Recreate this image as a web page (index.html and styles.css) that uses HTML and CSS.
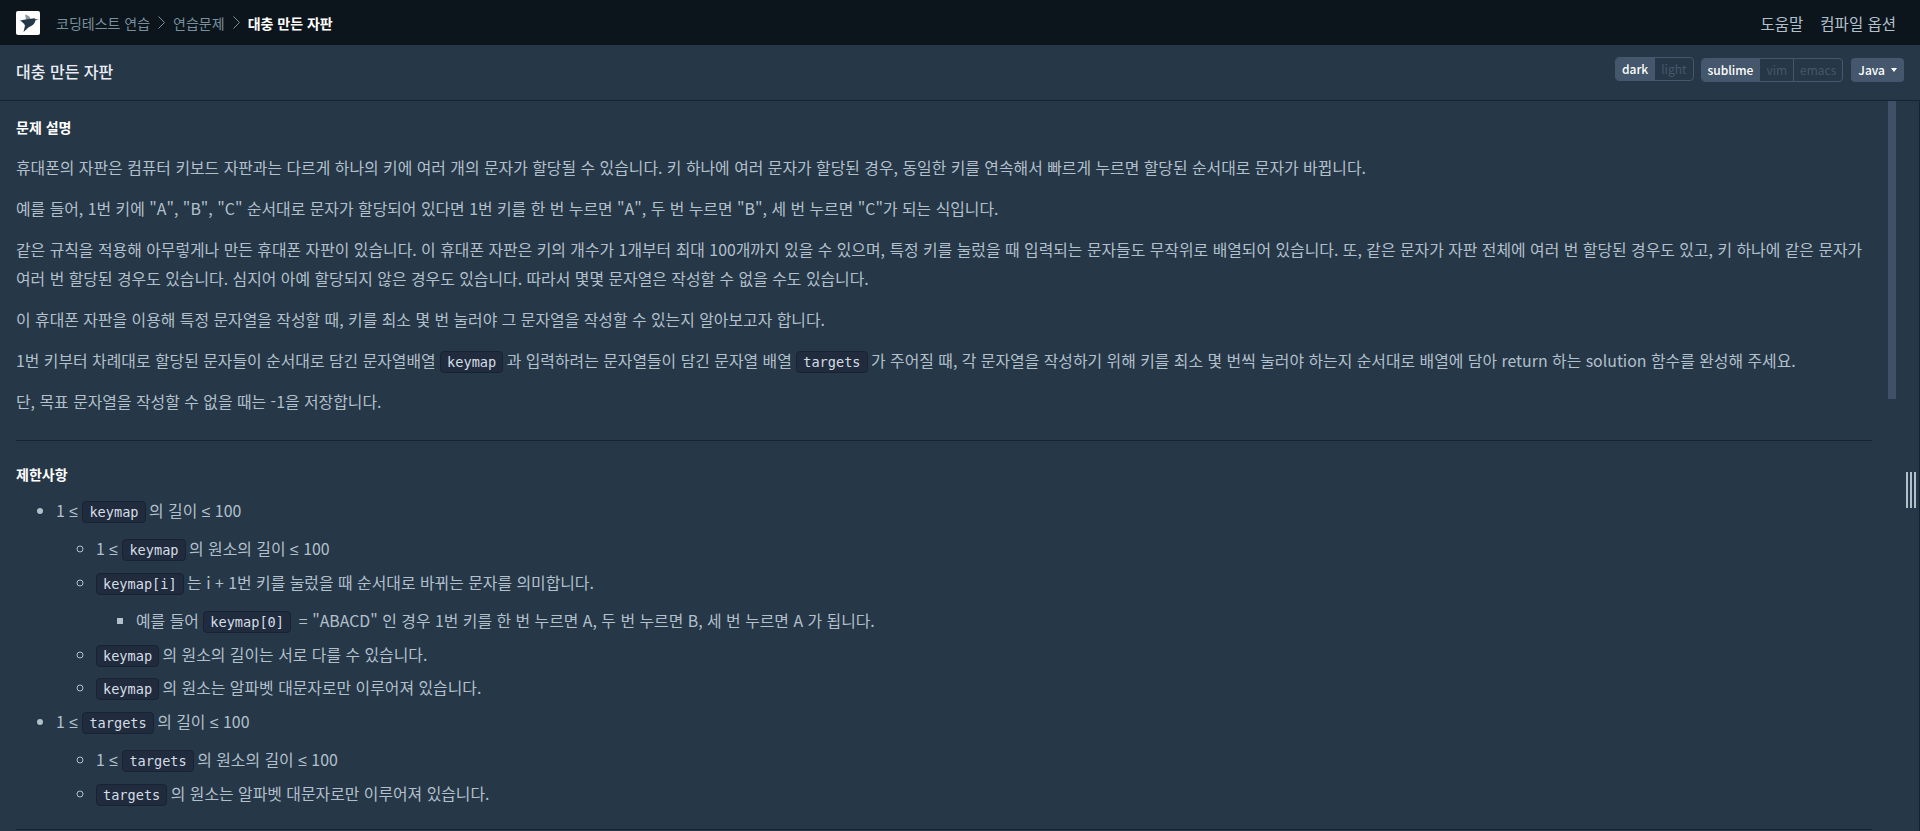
FILE: index.html
```html
<!DOCTYPE html>
<html lang="ko">
<head>
	<meta charset="UTF-8">
	<title>대충 만든 자판</title>
	<link rel="stylesheet" href="styles.css">
</head>
<body>
	<nav class="navbar">
		<div class="crumbs">
			<span class="logo">
				<svg width="24" height="24" viewBox="0 0 24 24">
					<rect width="24" height="24" rx="2" fill="#fff"/>
					<path d="M9 3.5 L13 5 L14.5 8 L10 8.5 Z" fill="#8a97a5"/>
					<path d="M4 9.5 L12 8 L17 7.5 C18 7 19 7.5 19.5 8.3 L23 8.6 L19.5 9.3 C19 12 17 15 13 16 L7.5 21 L9 14.5 C8 12 6 11 4 9.5 Z" fill="#263747"/>
				</svg>
			</span>
			<span class="crumb">코딩테스트 연습</span>
			<svg class="chev" width="7" height="13" viewBox="0 0 7 13"><path d="M.5 .5 L6.5 6.5 L.5 12.5" fill="none" stroke="#78909c"/></svg>
			<span class="crumb">연습문제</span>
			<svg class="chev" width="7" height="13" viewBox="0 0 7 13"><path d="M.5 .5 L6.5 6.5 L.5 12.5" fill="none" stroke="#78909c"/></svg>
			<span class="crumb now">대충 만든 자판</span>
		</div>
		<div class="nav-links">
			<span>도움말</span>
			<span>컴파일 옵션</span>
		</div>
	</nav>
	<header class="title-bar">
		<h1>대충 만든 자판</h1>
		<div class="options">
			<div class="toggle theme"><span class="on">dark</span><span>light</span></div>
			<div class="toggle"><span class="on">sublime</span><span>vim</span><span>emacs</span></div>
			<div class="lang">Java<i class="caret"></i></div>
		</div>
	</header>
	<main class="workspace">
		<section class="guide">
			<h6>문제 설명</h6>
			<p>휴대폰의 자판은 컴퓨터 키보드 자판과는 다르게 하나의 키에 여러 개의 문자가 할당될 수 있습니다. 키 하나에 여러 문자가 할당된 경우, 동일한 키를 연속해서 빠르게 누르면 할당된 순서대로 문자가 바뀝니다.</p>
			<p>예를 들어, 1번 키에 "A", "B", "C" 순서대로 문자가 할당되어 있다면 1번 키를 한 번 누르면 "A", 두 번 누르면 "B", 세 번 누르면 "C"가 되는 식입니다.</p>
			<p>같은 규칙을 적용해 아무렇게나 만든 휴대폰 자판이 있습니다. 이 휴대폰 자판은 키의 개수가 1개부터 최대 100개까지 있을 수 있으며, 특정 키를 눌렀을 때 입력되는 문자들도 무작위로 배열되어 있습니다. 또, 같은 문자가 자판 전체에 여러 번 할당된 경우도 있고, 키 하나에 같은 문자가 여러 번 할당된 경우도 있습니다. 심지어 아예 할당되지 않은 경우도 있습니다. 따라서 몇몇 문자열은 작성할 수 없을 수도 있습니다.</p>
			<p>이 휴대폰 자판을 이용해 특정 문자열을 작성할 때, 키를 최소 몇 번 눌러야 그 문자열을 작성할 수 있는지 알아보고자 합니다.</p>
			<p>1번 키부터 차례대로 할당된 문자들이 순서대로 담긴 문자열배열 <code>keymap</code> 과 입력하려는 문자열들이 담긴 문자열 배열 <code>targets</code> 가 주어질 때, 각 문자열을 작성하기 위해 키를 최소 몇 번씩 눌러야 하는지 순서대로 배열에 담아 return 하는 solution 함수를 완성해 주세요.</p>
			<p>단, 목표 문자열을 작성할 수 없을 때는 -1을 저장합니다.</p>
			<hr>
			<h5>제한사항</h5>
			<ul class="limits">
				<li>1 <span class="le">≤</span> <code>keymap</code> 의 길이 <span class="le">≤</span> 100
					<ul>
						<li>1 <span class="le">≤</span> <code>keymap</code> 의 원소의 길이 <span class="le">≤</span> 100</li>
						<li><code>keymap[i]</code> 는 i + 1번 키를 눌렀을 때 순서대로 바뀌는 문자를 의미합니다.
							<ul>
								<li>예를 들어 <code>keymap[0]</code> &nbsp;= "ABACD" 인 경우 1번 키를 한 번 누르면 A, 두 번 누르면 B, 세 번 누르면 A 가 됩니다.</li>
							</ul>
						</li>
						<li><code>keymap</code> 의 원소의 길이는 서로 다를 수 있습니다.</li>
						<li><code>keymap</code> 의 원소는 알파벳 대문자로만 이루어져 있습니다.</li>
					</ul>
				</li>
				<li>1 <span class="le">≤</span> <code>targets</code> 의 길이 <span class="le">≤</span> 100
					<ul>
						<li>1 <span class="le">≤</span> <code>targets</code> 의 원소의 길이 <span class="le">≤</span> 100</li>
						<li><code>targets</code> 의 원소는 알파벳 대문자로만 이루어져 있습니다.</li>
					</ul>
				</li>
			</ul>
			<hr class="next">
		</section>
		<div class="scroll-track"><div class="scroll-thumb"></div></div>
		<div class="gutter"><div class="grip"><i></i><i></i><i></i></div></div>
	</main>
</body>
</html>
```

FILE: styles.css
```css
* {
	margin: 0;
	padding: 0;
	box-sizing: border-box;
}
html, body {
	height: 100%;
	overflow: hidden;
}
body {
	display: flex;
	flex-direction: column;
	background: #263747;
	color: #b2c0cc;
	font-family: "Noto Sans CJK KR", "Noto Sans", sans-serif;
	font-size: 15.88px;
}
.navbar {
	height: 45px;
	flex: none;
	display: flex;
	justify-content: space-between;
	align-items: center;
	padding: 0 24px 0 16px;
	background: #0c151c;
}
.crumbs {
	display: flex;
	align-items: center;
	font-size: 14px;
}
.logo {
	display: flex;
	margin-right: 16px;
}
.crumb {
	color: #78909c;
}
.crumb.now {
	color: #fff;
	font-weight: 700;
}
.chev {
	margin: 0 8px;
}
.nav-links {
	display: flex;
	gap: 17px;
	font-size: 15.5px;
	color: #b2c0cc;
}
.title-bar {
	height: 56px;
	flex: none;
	display: flex;
	justify-content: space-between;
	align-items: center;
	padding: 0 16px;
	border-bottom: 1px solid #172334;
}
.title-bar h1 {
	font-size: 16px;
	font-weight: 500;
	color: #e9ecf3;
	margin-bottom: 4px;
}
.options {
	display: flex;
	align-items: center;
	gap: 8px;
	margin-bottom: 6px;
}
.toggle {
	display: flex;
	height: 24px;
	border: 1px solid #44576c;
	border-radius: 4px;
	overflow: hidden;
	font-size: 12px;
	line-height: 22px;
	color: #44576c;
}
.toggle span {
	padding: 0 6px;
	border-left: 1px solid #44576c;
}
.toggle span:first-child {
	border-left: 0;
}
.toggle .on {
	background: #44576c;
	color: #fff;
	font-weight: 500;
}
.theme {
	margin: 0 -1px 2px 1px;
}
.lang {
	display: flex;
	align-items: center;
	height: 24px;
	padding: 0 7px;
	border-radius: 4px;
	background: #44576c;
	color: #fff;
	font-size: 12px;
	font-weight: 500;
}
.caret {
	margin-left: 6px;
	border-top: 4px solid #fff;
	border-left: 3px solid transparent;
	border-right: 3px solid transparent;
}
.workspace {
	flex: 1;
	min-height: 0;
	display: flex;
	overflow: hidden;
}
.guide {
	flex: 1;
	min-width: 0;
	padding: 15px 16px 0;
	line-height: 28.8px;
}
.guide h6 {
	font-size: 14px;
	line-height: 22px;
	font-weight: 700;
	color: #fff;
	margin-bottom: 15.6px;
}
.guide p {
	margin-bottom: 12.4px;
}
.guide hr {
	border: 0;
	border-top: 1px solid #172334;
	margin: 23px 0 22px;
}
.guide hr.next {
	margin-top: 20px;
}
.guide h5 {
	font-size: 14px;
	line-height: 22px;
	font-weight: 700;
	color: #fff;
	margin-bottom: 11.6px;
}
.limits {
	padding-left: 40px;
}
.limits ul {
	padding-left: 40px;
	margin-top: 9.6px;
}
.limits li {
	margin-bottom: 4.8px;
}
.le {
	font-family: "Noto Sans", sans-serif;
}
code {
	display: inline-block;
	margin-right: -1px;
	padding: 0 6px;
	line-height: 20px;
	background: #202b3d;
	border: 1px solid #172334;
	border-radius: 4px;
	color: #d5dde5;
	font-family: "DejaVu Sans Mono", "Liberation Mono", monospace;
	font-size: 13.6px;
}
.scroll-track {
	width: 8px;
	flex: none;
}
.scroll-thumb {
	width: 8px;
	height: 298px;
	background: #3f5068;
}
.gutter {
	width: 24px;
	flex: none;
	display: flex;
	justify-content: flex-end;
	align-items: center;
	padding: 48px 3px 0 0;
	border-right: 1px solid #172334;
}
.grip {
	display: flex;
	gap: 2px;
	height: 36px;
}
.grip i {
	width: 2px;
	background: #b2c0cc;
}
```
